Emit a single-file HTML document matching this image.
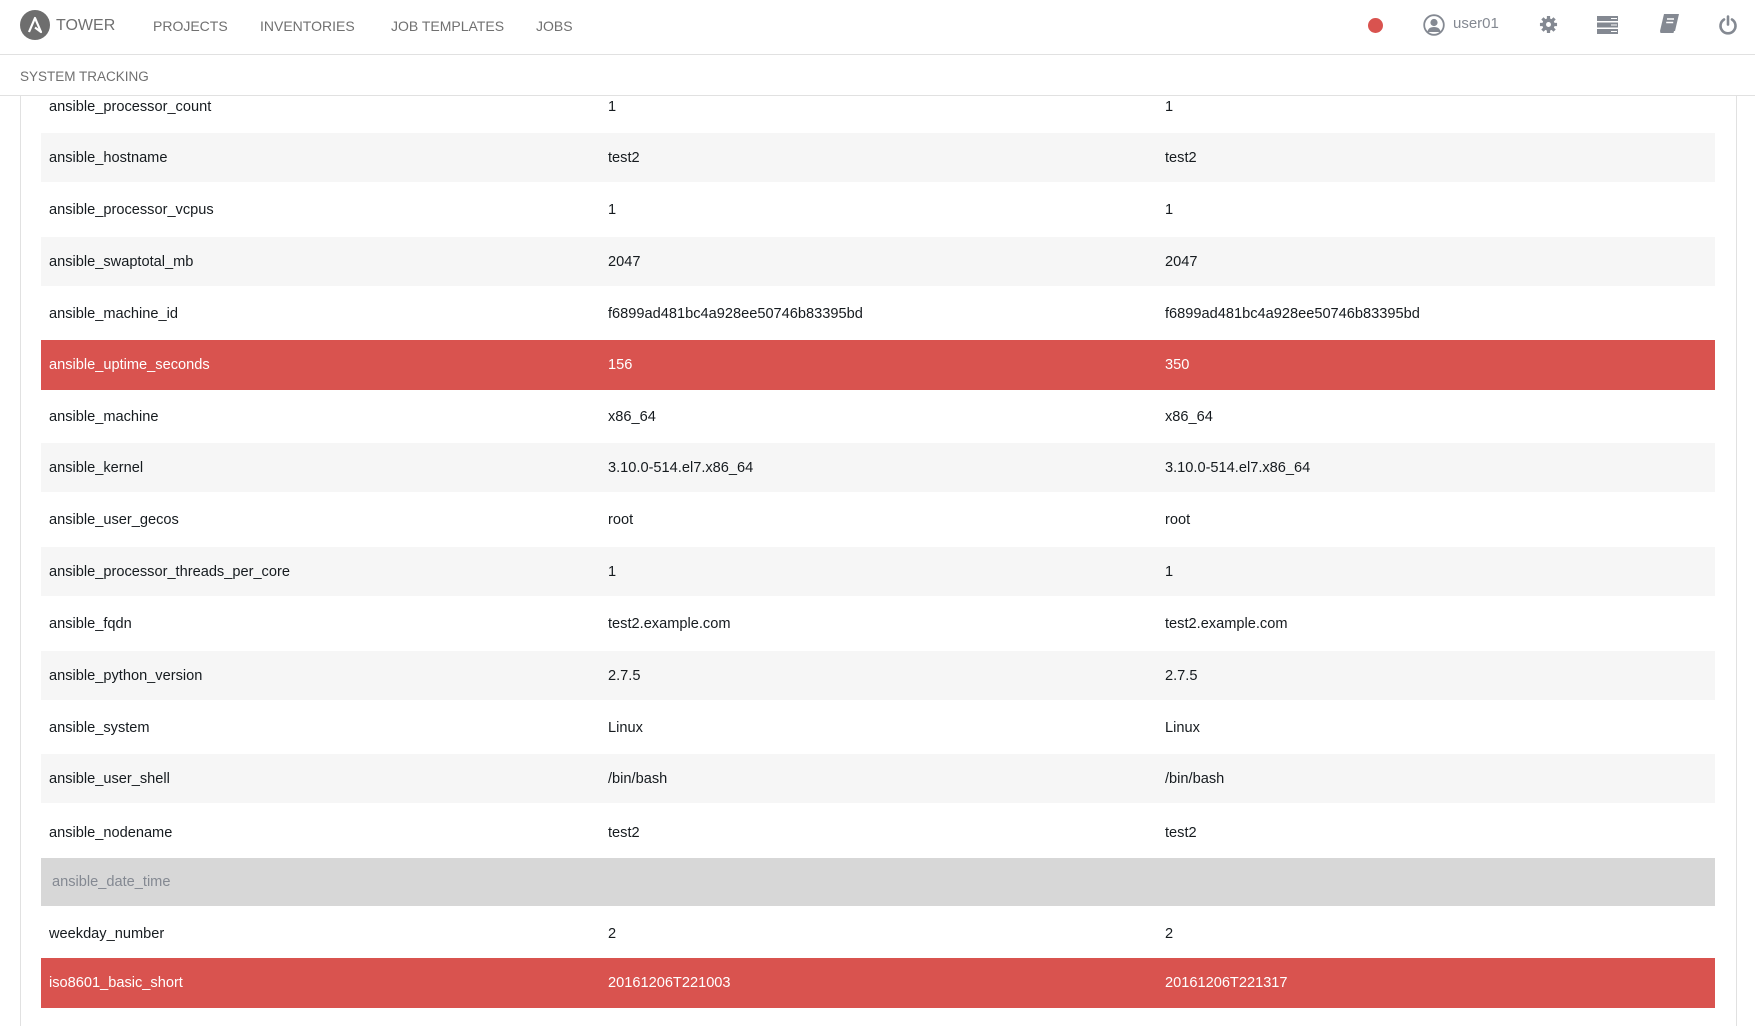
<!DOCTYPE html>
<html><head><meta charset="utf-8"><style>
*{margin:0;padding:0;box-sizing:border-box}
body{width:1755px;height:1014px;overflow:hidden;background:#fff;font-family:"Liberation Sans",sans-serif;color:#161b1f;position:relative}
.nav{position:absolute;left:0;top:0;width:1755px;height:55px;border-bottom:1px solid #e1e1e1;background:#fff}
.nav .t{position:absolute;top:18px;font-size:14px;color:#707070}
.sub{position:absolute;left:0;top:56px;width:1755px;height:40px;border-bottom:1px solid #e1e1e1}
.sub span{position:absolute;left:20px;top:13px;font-size:13.5px;color:#707070}
.panel{position:absolute;left:20px;top:96px;width:1717px;height:930px;border-left:1px solid #e1e1e1;border-right:1px solid #e1e1e1}
.row{position:absolute;left:41px;width:1674px;height:49px;font-size:14.6px;line-height:51px}
.row span{position:absolute;top:0}
.row .a{left:8px}.row .b{left:567px}.row .c{left:1124px}
.s{background:#f6f6f6}
.r{background:#d9534f;color:#fff}
.g{background:#d7d7d7;color:#848992}
.g .a{left:11px}
</style></head><body>
<div class="nav">
<svg style="position:absolute;left:20px;top:10px" width="30" height="30" viewBox="0 0 30 30"><circle cx="15" cy="15" r="15" fill="#6e6e6e"/><path d="M9 22 L15 8 L21 22 L15 17.5" fill="none" stroke="#fff" stroke-width="2.2" stroke-linejoin="round"/></svg>
<span class="t" style="left:56px;font-size:16px;top:17px">TOWER</span>
<span class="t" style="left:153px">PROJECTS</span>
<span class="t" style="left:260px">INVENTORIES</span>
<span class="t" style="left:391px">JOB TEMPLATES</span>
<span class="t" style="left:536px">JOBS</span>
<svg style="position:absolute;left:1368px;top:18px" width="15" height="15"><circle cx="7.5" cy="7.5" r="7.5" fill="#d9534f"/></svg>
<svg style="position:absolute;left:1423px;top:14px" width="22" height="22" viewBox="0 0 22 22"><circle cx="11" cy="11" r="9.8" fill="none" stroke="#848992" stroke-width="1.8"/><circle cx="11" cy="8.5" r="3.6" fill="#848992"/><path d="M4.5 18 Q5 13 11 13 Q17 13 17.5 18 Z" fill="#848992"/></svg>
<span class="t" style="left:1453px;top:15px;font-size:15px;color:#848992">user01</span>
<svg style="position:absolute;left:1539px;top:15px" width="19" height="19" viewBox="0 0 20 20"><g fill="#848992"><circle cx="10" cy="10" r="6.5"/><g stroke="#848992" stroke-width="3.4"><path d="M10 1v18M1 10h18M3.6 3.6l12.8 12.8M16.4 3.6L3.6 16.4"/></g></g><circle cx="10" cy="10" r="2.6" fill="#fff"/></svg>
<svg style="position:absolute;left:1597px;top:16px" width="21" height="18" viewBox="0 0 21 18"><g fill="#848992"><rect x="0" y="0" width="21" height="5"/><rect x="0" y="6.5" width="21" height="5"/><rect x="0" y="13" width="21" height="5"/></g><g fill="#fff"><rect x="14" y="2" width="6" height="1"/><rect x="14" y="8.5" width="6" height="1"/><rect x="14" y="15" width="6" height="1"/></g></svg>
<svg style="position:absolute;left:1659px;top:14px" width="20" height="21" viewBox="0 0 20 21"><path d="M5 0h15l-4 17H1z" fill="#848992"/><path d="M1 17h14l-0.5 2H1.5z" fill="#848992"/><path d="M8 5h7M7.2 8.5h7" stroke="#fff" stroke-width="1.4"/></svg>
<svg style="position:absolute;left:1718px;top:15px" width="20" height="20" viewBox="0 0 20 20"><path d="M6 4.5A7.5 7.5 0 1 0 14 4.5" fill="none" stroke="#848992" stroke-width="2.6" stroke-linecap="round"/><path d="M10 1.5v8" stroke="#848992" stroke-width="2.6" stroke-linecap="round"/></svg>
</div>
<div class="sub"><span>SYSTEM TRACKING</span></div>
<div class="panel"></div>

<div class="row" style="top:82px"><span class="a">ansible_processor_count</span><span class="b">1</span><span class="c">1</span></div>
<div class="row s" style="top:133px"><span class="a">ansible_hostname</span><span class="b">test2</span><span class="c">test2</span></div>
<div class="row" style="top:185px"><span class="a">ansible_processor_vcpus</span><span class="b">1</span><span class="c">1</span></div>
<div class="row s" style="top:237px"><span class="a">ansible_swaptotal_mb</span><span class="b">2047</span><span class="c">2047</span></div>
<div class="row" style="top:289px"><span class="a">ansible_machine_id</span><span class="b">f6899ad481bc4a928ee50746b83395bd</span><span class="c">f6899ad481bc4a928ee50746b83395bd</span></div>
<div class="row r" style="top:340px;height:50px"><span class="a">ansible_uptime_seconds</span><span class="b">156</span><span class="c">350</span></div>
<div class="row" style="top:392px"><span class="a">ansible_machine</span><span class="b">x86_64</span><span class="c">x86_64</span></div>
<div class="row s" style="top:443px"><span class="a">ansible_kernel</span><span class="b">3.10.0-514.el7.x86_64</span><span class="c">3.10.0-514.el7.x86_64</span></div>
<div class="row" style="top:495px"><span class="a">ansible_user_gecos</span><span class="b">root</span><span class="c">root</span></div>
<div class="row s" style="top:547px"><span class="a">ansible_processor_threads_per_core</span><span class="b">1</span><span class="c">1</span></div>
<div class="row" style="top:599px"><span class="a">ansible_fqdn</span><span class="b">test2.example.com</span><span class="c">test2.example.com</span></div>
<div class="row s" style="top:651px"><span class="a">ansible_python_version</span><span class="b">2.7.5</span><span class="c">2.7.5</span></div>
<div class="row" style="top:703px"><span class="a">ansible_system</span><span class="b">Linux</span><span class="c">Linux</span></div>
<div class="row s" style="top:754px"><span class="a">ansible_user_shell</span><span class="b">/bin/bash</span><span class="c">/bin/bash</span></div>
<div class="row" style="top:808px"><span class="a">ansible_nodename</span><span class="b">test2</span><span class="c">test2</span></div>
<div class="row g" style="top:858px;height:48px;line-height:49px"><span class="a">ansible_date_time</span></div>
<div class="row" style="top:909px"><span class="a">weekday_number</span><span class="b">2</span><span class="c">2</span></div>
<div class="row r" style="top:958px;height:50px;line-height:51px"><span class="a">iso8601_basic_short</span><span class="b">20161206T221003</span><span class="c">20161206T221317</span></div>
</body></html>
